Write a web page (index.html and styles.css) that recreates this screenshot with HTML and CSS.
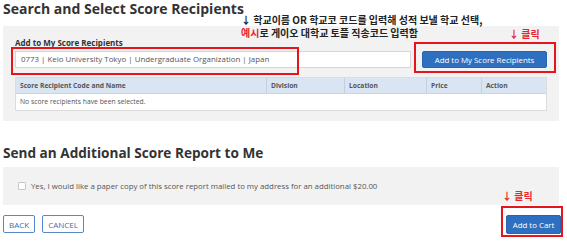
FILE: index.html
```html
<!DOCTYPE html>
<html>
<head>
<meta charset="utf-8">
<link rel="stylesheet" href="styles.css">
</head>
<body>
<div class="page">
  <h1 class="title">Search and Select Score Recipients</h1>
  <div class="panel panel-search">
    <div class="label">Add to My Score Recipients</div>
    <div class="input-row">
      <div class="input">0773 | Keio University Tokyo | Undergraduate Organization | Japan</div>
      <button class="btn-primary btn-add">Add to My Score Recipients</button>
    </div>
    <div class="table">
      <div class="thead">
        <div class="th c1">Score Recipient Code and Name</div>
        <div class="th c2">Division</div>
        <div class="th c3">Location</div>
        <div class="th c4">Price</div>
        <div class="th c5">Action</div>
      </div>
      <div class="tbody">No score recipients have been selected.</div>
    </div>
  </div>
  <h2 class="title2">Send an Additional Score Report to Me</h2>
  <div class="panel panel-check">
    <span class="checkbox"></span>
    <span class="check-text">Yes, I would like a paper copy of this score report mailed to my address for an additional $20.00</span>
  </div>
  <div class="actions">
    <button class="btn-outline">BACK</button>
    <button class="btn-outline">CANCEL</button>
    <button class="btn-primary btn-cart">Add to Cart</button>
  </div>

  <div class="note note-main"><span class="arrow">↓</span> 학교이름 OR 학교코 코드를 입력해 성적 보낼 학교 선택,<br><span class="red">예시</span>로 게이오 대학교 토플 직송코드 입력함</div>
  <div class="note note-click1 red"><span class="arrow">↓</span> 클릭</div>
  <div class="note note-click2 red"><span class="arrow">↓</span> 클릭</div>
  <div class="redbox box-input"></div>
  <div class="redbox box-add"></div>
  <div class="redbox box-cart"></div>
</div>
</body>
</html>
```
FILE: styles.css
```css
html, body {
  margin: 0;
  padding: 0;
  background: #fff;
}
body {
  font-family: "Open Sans", "Noto Sans", sans-serif;
  color: #555;
  overflow: hidden;
}
.page {
  position: relative;
  width: 567px;
  height: 241px;
  padding-left: 3px;
  box-sizing: border-box;
}
.title {
  margin: -1px 0 0 0;
  font-size: 14px;
  line-height: 19px;
  font-weight: 700;
  color: #333;
}
.panel {
  background: #f2f2f2;
  width: 556px;
  box-sizing: border-box;
}
.panel-search {
  margin-top: 8px;
  padding: 12px 12px 11px 12px;
  height: 95px;
}
.label {
  font-size: 8px;
  font-weight: 700;
  color: #333;
  line-height: 10px;
  margin-top: 0px;
}
.input-row {
  display: flex;
  gap: 11px;
  margin-top: 3px;
  height: 17px;
}
.input {
  width: 396px;
  height: 17px;
  box-sizing: border-box;
  background: #fff;
  border: 1px solid #d6d6d6;
  font-size: 7.9px;
  line-height: 15px;
  padding-left: 5px;
  color: #555;
  white-space: nowrap;
}
.btn-primary {
  background: #2f6fbf;
  color: #fff;
  border: 1px solid #2a64ad;
  border-radius: 2px;
  font-family: "Open Sans", sans-serif;
  font-size: 7.9px;
  padding: 0;
  height: 17px;
  box-sizing: border-box;
}
.btn-add {
  width: 125px;
}
.table {
  margin-top: 9px;
  width: 532px;
  border: 1px solid #dcdcdc;
  box-sizing: border-box;
}
.thead {
  display: grid;
  grid-template-columns: 250px 78px 82px 55px 1fr;
  background: #d9e5f3;
  height: 16px;
  border-bottom: 1px solid #cbd6e3;
  box-sizing: border-box;
}
.th {
  font-size: 6.7px;
  font-weight: 700;
  color: #555;
  line-height: 15px;
  padding-left: 4px;
  border-left: 1px solid #c4d0de;
}
.th.c1 { border-left: none; }
.tbody {
  background: #fff;
  height: 16px;
  font-size: 6.8px;
  line-height: 16px;
  padding-left: 4px;
  color: #555;
}
.title2 {
  margin: 22px 0 0 0;
  font-size: 13.6px;
  line-height: 19px;
  font-weight: 700;
  color: #333;
}
.panel-check {
  margin-top: 5px;
  height: 38px;
  display: flex;
  align-items: center;
  padding-left: 15px;
  gap: 5px;
}
.checkbox {
  width: 6px;
  height: 6px;
  border: 1px solid #c8c8c8;
  background: #fff;
  border-radius: 1px;
}
.check-text {
  font-size: 7.8px;
  color: #555;
}
.actions {
  display: flex;
  gap: 7px;
  margin-top: 10px;
  height: 18px;
  align-items: flex-start;
}
.btn-outline {
  height: 18px;
  background: #fff;
  border: 1px solid #5a86c4;
  border-radius: 2px;
  color: #3d6db0;
  font-family: "Open Sans", sans-serif;
  font-size: 8px;
  padding: 0 5px;
}
.btn-cart {
  margin-left: auto;
  margin-right: 6px;
  width: 55px;
  height: 19px;
}
.note {
  position: absolute;
  font-family: "Noto Sans CJK KR", "Open Sans", sans-serif;
  font-weight: 700;
  font-size: 10px;
  color: #222;
  line-height: 13px;
  white-space: nowrap;
}
.red { color: #e8262c; }
.note-main {
  left: 241px;
  top: 14px;
}
.note-click1 {
  left: 509px;
  top: 28px;
}
.note-click2 {
  left: 502px;
  top: 190px;
}
.redbox {
  position: absolute;
  border: 2px solid #e8141c;
  box-sizing: border-box;
}
.box-input {
  left: 11px;
  top: 48px;
  width: 288px;
  height: 28px;
}
.box-add {
  left: 414px;
  top: 43px;
  width: 142px;
  height: 31px;
}
.box-cart {
  left: 501px;
  top: 207px;
  width: 62px;
  height: 31px;
}
```
